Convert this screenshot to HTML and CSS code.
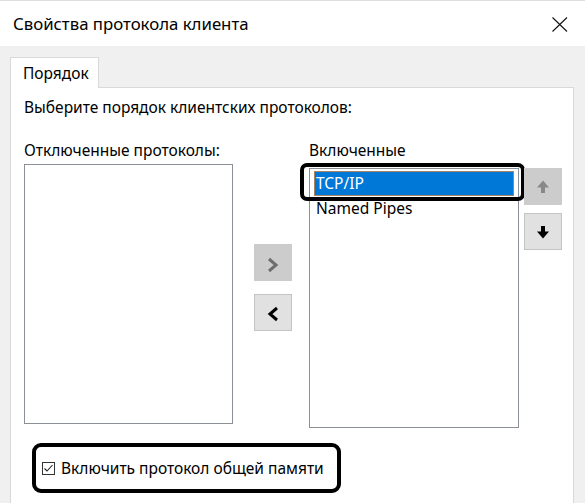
FILE: index.html
```html
<!DOCTYPE html>
<html lang="ru">
<head>
<meta charset="utf-8">
<title>Свойства протокола клиента</title>
<link rel="stylesheet" href="styles.css">
</head>
<body>
<div class="window">
  <div class="titlebar">
    <span class="title">Свойства протокола клиента</span>
    <svg class="close" width="16" height="15" viewBox="0 0 16 15"><path d="M0.5 0.5L15 14.5M15 0.5L0.5 14.5" stroke="#111" stroke-width="1.1" fill="none"/></svg>
  </div>
  <div class="body">
    <div class="tabs"><div class="tab">Порядок</div></div>
    <div class="panel">
      <div class="intro">Выберите порядок клиентских протоколов:</div>
      <div class="lists">
        <div class="col col-left">
          <div class="label">Отключенные протоколы:</div>
          <div class="listbox"></div>
        </div>
        <div class="movers">
          <button class="btn btn-disabled" type="button">
            <svg width="38" height="37" viewBox="0 0 38 37"><path d="M15 15L22 21L15 27" stroke="#6e6e6e" stroke-width="3" fill="none"/></svg>
          </button>
          <button class="btn" type="button">
            <svg width="38" height="37" viewBox="0 0 38 37"><path d="M23 14L16 20L23 26" stroke="#000" stroke-width="3" fill="none"/></svg>
          </button>
        </div>
        <div class="col col-right">
          <div class="label">Включенные</div>
          <div class="listbox listbox-right">
            <div class="item item-selected">TCP/IP</div>
            <div class="item">Named Pipes</div>
          </div>
          <div class="callout callout-list"></div>
        </div>
        <div class="order">
          <button class="btn btn-disabled" type="button">
            <svg width="38" height="37" viewBox="0 0 38 37"><path d="M19 12.5L25 19.5H21V25H17V19.5H13Z" fill="#888"/></svg>
          </button>
          <button class="btn" type="button">
            <svg width="38" height="37" viewBox="0 0 38 37"><path d="M19 25.5L25 18.5H21V13H17V18.5H13Z" fill="#000"/></svg>
          </button>
        </div>
      </div>
      <div class="shared">
        <span class="checkbox"><svg width="13" height="13" viewBox="0 0 13 13"><path d="M2.5 6.5L5 9L10.5 3" stroke="#222" stroke-width="1.1" fill="none"/></svg></span>
        <span class="shared-text">Включить протокол общей памяти</span>
      </div>
    </div>
  </div>
</div>
</body>
</html>
```

FILE: styles.css
```css
* {
  box-sizing: border-box;
}

html, body {
  margin: 0;
  padding: 0;
  background: #f0f0f0;
}

.window {
  width: 585px;
  height: 503px;
  overflow: hidden;
  background: #f0f0f0;
  font-family: "Noto Sans", "Open Sans", sans-serif;
  font-size: 15.5px;
  line-height: 20px;
  color: #000;
}

.titlebar {
  height: 46px;
  background: #fff;
  border-top: 1px solid #dedede;
  display: flex;
  align-items: center;
  justify-content: space-between;
  padding: 0 17px 0 13px;
}

.title {
  font-size: 16.8px;
  line-height: 22px;
  padding-top: 1px;
}

.close {
  display: block;
  margin-top: 1px;
}

.body {
  padding: 11px 11px 0 10px;
}

.tabs {
  display: flex;
  position: relative;
  z-index: 1;
  margin-bottom: -1px;
}

.tab {
  width: 89px;
  height: 31px;
  background: #fff;
  border: 1px solid #d9d9d9;
  border-bottom: none;
  padding-left: 12px;
  display: flex;
  align-items: center;
}

.panel {
  background: #fff;
  border: 1px solid #d9d9d9;
  height: 460px;
  padding: 9px 0 0 13px;
}

.intro {
  height: 20px;
}

.lists {
  display: flex;
  margin-top: 23px;
  align-items: flex-start;
}

.col {
  position: relative;
}

.col-left {
  width: 209px;
}

.col-right {
  width: 210px;
  margin-left: 17px;
}

.label {
  height: 20px;
}

.listbox {
  height: 260px;
  margin-top: 4px;
  background: #fff;
  border: 1px solid #8b8f96;
  padding: 2px 4px;
}

.listbox-right {
  margin-top: 8px;
}

.item {
  height: 25px;
  line-height: 23px;
  padding-left: 1px;
  border: 1px solid transparent;
}

.item-selected {
  background: #0078d7;
  color: #fff;
  border-color: #a9825f;
}

.movers {
  width: 38px;
  margin-left: 21px;
  padding-top: 104px;
  display: flex;
  flex-direction: column;
  gap: 13px;
}

.order {
  width: 38px;
  margin-left: 5px;
  padding-top: 28px;
  display: flex;
  flex-direction: column;
  gap: 8px;
}

.btn {
  width: 38px;
  height: 37px;
  padding: 0;
  margin: 0;
  border: 1px solid #c4c4c4;
  background: #e1e1e1;
  display: block;
  position: relative;
}

.btn svg {
  position: absolute;
  left: -1px;
  top: -1px;
}

.btn-disabled {
  background: #cccccc;
  border-color: #cccccc;
}

.callout {
  position: absolute;
  border: 4px solid #000;
  border-radius: 7px;
}

.callout-list {
  left: -9px;
  top: 23px;
  width: 225px;
  height: 38px;
}

.shared {
  margin: 15px 0 0 8px;
  width: 309px;
  height: 50px;
  border: 4px solid #000;
  border-radius: 9px;
  display: flex;
  align-items: center;
  padding-left: 6px;
}

.checkbox {
  width: 13px;
  height: 13px;
  border: 1px solid #333;
  background: #fff;
  display: block;
  position: relative;
  margin-top: 1px;
}

.checkbox svg {
  position: absolute;
  left: -1px;
  top: -1px;
}

.shared-text {
  margin-left: 6px;
}
```
